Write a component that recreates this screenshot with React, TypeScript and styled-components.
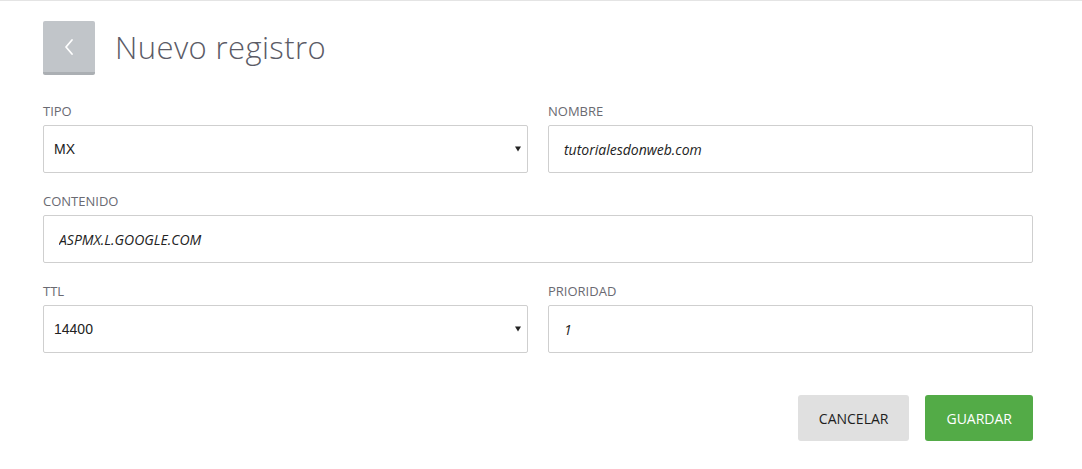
import React from 'react';
import styled, { createGlobalStyle } from 'styled-components';

const GlobalStyle = createGlobalStyle`
  html, body {
    margin: 0;
    padding: 0;
    background: #ffffff;
    font-family: "Open Sans", "Liberation Sans", Arial, sans-serif;
  }
`;

const Page = styled.div`
  border-top: 1px solid #e4e4e4;
  min-height: 468px;
  padding: 20px 0 0 43px;
  box-sizing: border-box;
`;

const Container = styled.div`
  width: 990px;
`;

const Header = styled.div`
  display: flex;
  align-items: center;
  gap: 20px;
  margin-bottom: 27px;
`;

const BackButton = styled.button`
  width: 52px;
  height: 54px;
  border: none;
  border-bottom: 3px solid #abafb3;
  border-radius: 2px;
  background: #c1c5c9;
  display: flex;
  align-items: center;
  justify-content: center;
  padding: 0;
  cursor: pointer;
`;

const Title = styled.h1`
  margin: 0;
  font-family: "Open Sans", sans-serif;
  font-weight: 300;
  font-size: 31px;
  color: #5b5b66;
  letter-spacing: 0.4px;
  line-height: 40px;
  padding-bottom: 3px;
`;

const Grid = styled.div`
  display: grid;
  grid-template-columns: 485px 485px;
  column-gap: 20px;
  row-gap: 19px;
`;

const Field = styled.div<{ $full?: boolean }>`
  display: flex;
  flex-direction: column;
  grid-column: ${(p) => (p.$full ? '1 / span 2' : 'auto')};
`;

const Label = styled.label`
  font-family: "Open Sans", sans-serif;
  font-size: 13px;
  line-height: 18px;
  color: #6a6a72;
  text-transform: uppercase;
  margin-bottom: 5px;
`;

const SelectWrap = styled.div`
  position: relative;
`;

const Select = styled.select`
  appearance: none;
  width: 100%;
  height: 48px;
  box-sizing: border-box;
  border: 1px solid #cfcfcf;
  border-radius: 2px;
  background: #fff;
  padding: 0 10px;
  font-family: "Liberation Sans", Arial, sans-serif;
  font-size: 14px;
  color: #222;
  outline: none;
`;

const Arrow = styled.svg`
  position: absolute;
  right: 7px;
  top: 21px;
  pointer-events: none;
`;

const Input = styled.input`
  width: 100%;
  height: 48px;
  box-sizing: border-box;
  border: 1px solid #cfcfcf;
  border-radius: 2px;
  background: #fff;
  padding: 0 15px;
  font-family: "Open Sans", sans-serif;
  font-style: italic;
  font-size: 14px;
  color: #222;
  outline: none;
`;

const Actions = styled.div`
  display: flex;
  justify-content: flex-end;
  gap: 16px;
  margin-top: 42px;
`;

const Button = styled.button<{ $primary?: boolean }>`
  height: 46px;
  padding: 0 21px;
  border: none;
  border-radius: 3px;
  background: ${(p) => (p.$primary ? '#53ab47' : '#e0e0e0')};
  color: ${(p) => (p.$primary ? '#ffffff' : '#1e1e1e')};
  font-family: "Open Sans", sans-serif;
  font-size: 14px;
  text-transform: uppercase;
  cursor: pointer;
`;

function SelectField({ label, value, options }: { label: string; value: string; options: string[] }) {
  return (
    <Field>
      <Label>{label}</Label>
      <SelectWrap>
        <Select defaultValue={value}>
          {options.map((o) => (
            <option key={o}>{o}</option>
          ))}
        </Select>
        <Arrow width="6" height="6" viewBox="0 0 6 6">
          <path d="M0 0.5 H6 L3 5.5 Z" fill="#222" />
        </Arrow>
      </SelectWrap>
    </Field>
  );
}

function TextField({ label, value, full }: { label: string; value: string; full?: boolean }) {
  return (
    <Field $full={full}>
      <Label>{label}</Label>
      <Input defaultValue={value} />
    </Field>
  );
}

export default function App() {
  return (
    <>
      <GlobalStyle />
      <Page>
        <Container>
          <Header>
            <BackButton aria-label="Volver">
              <svg width="12" height="20" viewBox="0 0 12 20">
                <path d="M9 3 L3 10 L9 17" fill="none" stroke="#fff" strokeWidth="1.8" strokeLinecap="round" strokeLinejoin="round" />
              </svg>
            </BackButton>
            <Title>Nuevo registro</Title>
          </Header>
          <Grid>
            <SelectField label="Tipo" value="MX" options={['A', 'AAAA', 'CNAME', 'MX', 'TXT']} />
            <TextField label="Nombre" value="tutorialesdonweb.com" />
            <TextField label="Contenido" value="ASPMX.L.GOOGLE.COM" full />
            <SelectField label="TTL" value="14400" options={['3600', '14400', '86400']} />
            <TextField label="Prioridad" value="1" />
          </Grid>
          <Actions>
            <Button>Cancelar</Button>
            <Button $primary>Guardar</Button>
          </Actions>
        </Container>
      </Page>
    </>
  );
}
